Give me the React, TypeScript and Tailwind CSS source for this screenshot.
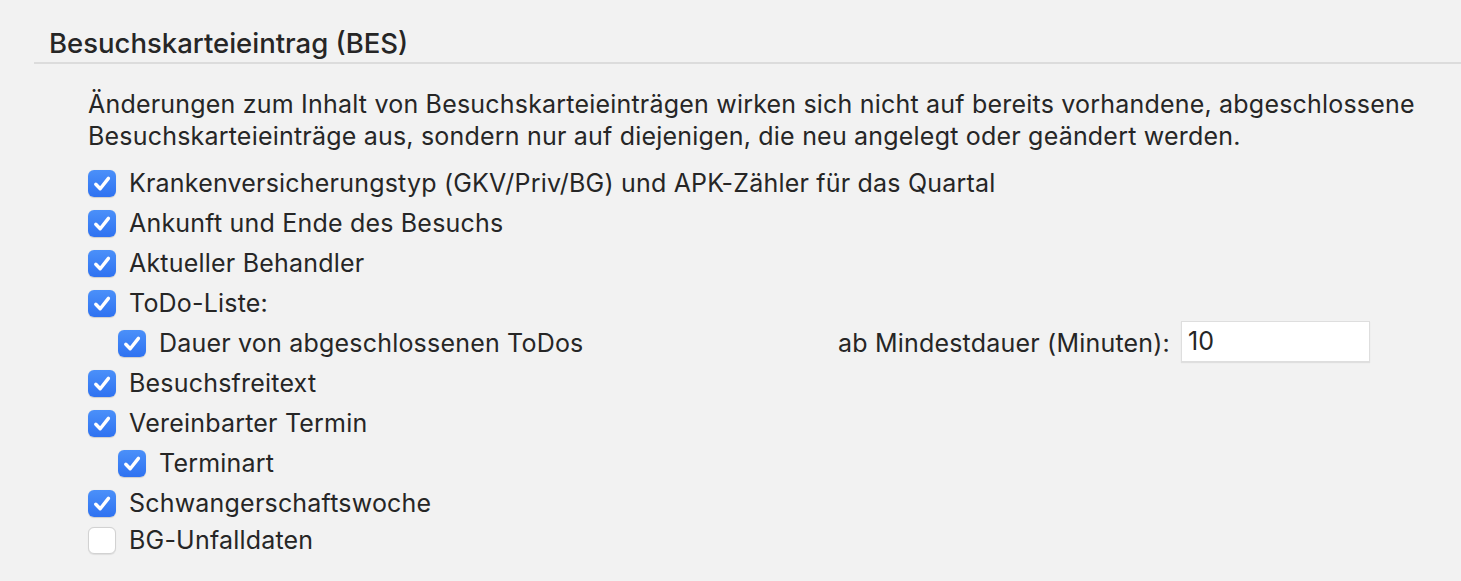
import React from 'react'

type Item = {
  label: string
  checked: boolean
  level: 0 | 1
  extra?: boolean
}

const ITEMS: Item[] = [
  { label: 'Krankenversicherungstyp (GKV/Priv/BG) und APK-Zähler für das Quartal', checked: true, level: 0 },
  { label: 'Ankunft und Ende des Besuchs', checked: true, level: 0 },
  { label: 'Aktueller Behandler', checked: true, level: 0 },
  { label: 'ToDo-Liste:', checked: true, level: 0 },
  { label: 'Dauer von abgeschlossenen ToDos', checked: true, level: 1, extra: true },
  { label: 'Besuchsfreitext', checked: true, level: 0 },
  { label: 'Vereinbarter Termin', checked: true, level: 0 },
  { label: 'Terminart', checked: true, level: 1 },
  { label: 'Schwangerschaftswoche', checked: true, level: 0 },
  { label: 'BG-Unfalldaten', checked: false, level: 0 },
]

function Checkbox({ checked }: { checked: boolean }) {
  if (!checked) {
    return (
      <span className="w-[28px] h-[27px] shrink-0 rounded-[6px] bg-white border border-[#d2d2d2] shadow-[0_0.5px_1px_rgba(0,0,0,0.08)]" />
    )
  }
  return (
    <span className="w-[28px] h-[27px] shrink-0 rounded-[6px] bg-gradient-to-b from-[#4b90f9] to-[#2f72f1] flex items-center justify-center shadow-[0_0.5px_1px_rgba(0,0,0,0.15)]">
      <svg width="28" height="27" viewBox="0 0 28 27" fill="none">
        <path
          d="M7.8 14.2l4.4 4.6L20.4 8.4"
          stroke="white"
          strokeWidth="3.4"
          strokeLinecap="round"
          strokeLinejoin="round"
        />
      </svg>
    </span>
  )
}

export default function App() {
  return (
    <div
      className="w-[1461px] h-[581px] bg-[#f2f2f2] text-[#262626] overflow-hidden"
      style={{ fontFamily: 'Inter, "Noto Sans", sans-serif' }}
    >
      <div className="pl-[34px] pt-[27px]">
        <div className="border-b-2 border-[#dcdcdc] pl-[15px] pb-[3px]">
          <h1 className="text-[27.5px] leading-[32px] font-medium">Besuchskarteieintrag (BES)</h1>
        </div>

        <div className="pl-[54px] pt-[24px]">
          <p className="text-[25px] tracking-[0.2px] leading-[32px]">
            Änderungen zum Inhalt von Besuchskarteieinträgen wirken sich nicht auf bereits vorhandene, abgeschlossene
            <br />
            Besuchskarteieinträge aus, sondern nur auf diejenigen, die neu angelegt oder geändert werden.
          </p>

          <div className="mt-[11px] flex flex-col">
            {ITEMS.map((item, index) => (
              <div
                key={index}
                className={`flex items-center ${index === ITEMS.length - 1 ? 'h-[34px]' : 'h-[40px]'} ${
                  item.level === 1 ? 'pl-[30px]' : ''
                }`}
              >
                <Checkbox checked={item.checked} />
                <span className="ml-[13px] text-[25px] tracking-[0.2px] leading-none">{item.label}</span>
                {item.extra && (
                  <div className="ml-auto mr-[91px] flex items-center">
                    <span className="text-[25px] tracking-[0.2px] leading-none mr-[11px]">
                      ab Mindestdauer (Minuten):
                    </span>
                    <div className="w-[189px] h-[41px] -mt-[3px] bg-white border border-[#dedede] shadow-[0_1px_1px_rgba(0,0,0,0.08)] flex items-center px-[6px] text-[25px]">
                      10
                    </div>
                  </div>
                )}
              </div>
            ))}
          </div>
        </div>
      </div>
    </div>
  )
}
